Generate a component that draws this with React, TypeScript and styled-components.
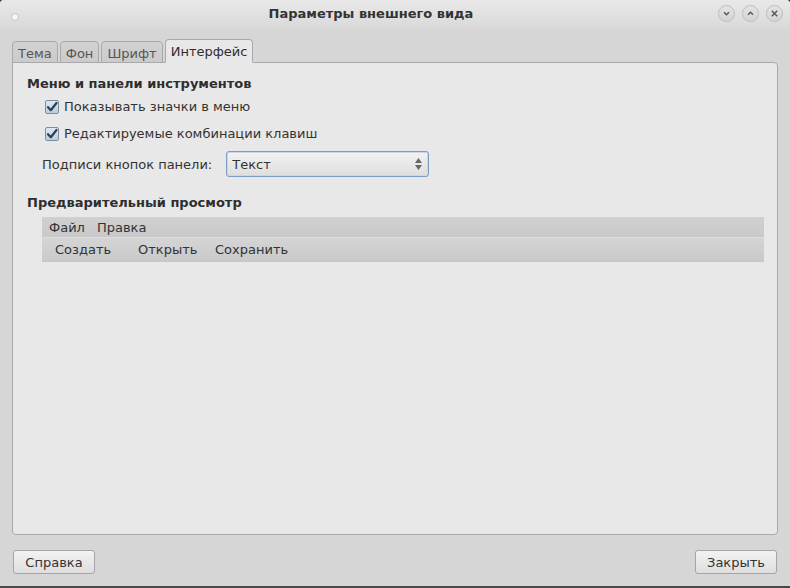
import React from "react";
import styled, { createGlobalStyle } from "styled-components";

const Global = createGlobalStyle`
  html, body { margin: 0; padding: 0; background: #2b3a42; }
  body { font-family: "DejaVu Sans", "Noto Sans", sans-serif; font-size: 13px; color: #2e2e2e; }
  * { box-sizing: border-box; }
`;

const Window = styled.div`
  width: 790px;
  height: 588px;
  background: #d6d6d6;
  border-radius: 4px 4px 0 0;
  border-bottom: 2px solid #4a4a4a;
  display: flex;
  flex-direction: column;
  overflow: hidden;
`;

const TitleBar = styled.div`
  height: 30px;
  flex: none;
  display: grid;
  grid-template-columns: 80px 1fr 80px;
  align-items: center;
  background: linear-gradient(#e9e9e9, #d8d8d8);
`;

const MenuDot = styled.div`
  width: 8px;
  height: 8px;
  border-radius: 50%;
  margin-left: 11px;
  margin-top: 3px;
  background: #f6f6f6;
  border: 1px solid #c4c4c4;
`;

const Title = styled.div`
  text-align: center;
  font-weight: bold;
  font-size: 13px;
  color: #333;
  margin-top: -4px;
  margin-right: 48px;
`;

const WinButtons = styled.div`
  display: flex;
  gap: 7px;
  justify-content: flex-end;
  padding-right: 7px;
  margin-top: -4px;
`;

const WinButton = styled.div`
  width: 17px;
  height: 17px;
  border-radius: 50%;
  border: 1px solid #bdbdbd;
  background: linear-gradient(#e4e4e4, #d4d4d4);
  display: flex;
  align-items: center;
  justify-content: center;
`;

const Body = styled.div`
  flex: 1;
  display: flex;
  flex-direction: column;
  padding: 9px 12px 12px 12px;
`;

const Tabs = styled.div`
  display: flex;
  align-items: flex-end;
  gap: 2px;
  height: 24px;
  position: relative;
  z-index: 1;
  margin-bottom: -1px;
`;

const Tab = styled.div<{ $active?: boolean }>`
  height: ${(p) => (p.$active ? "24px" : "22px")};
  padding: 0 ${(p) => (p.$active ? "5px" : "5px")};
  display: flex;
  align-items: center;
  padding-top: ${(p) => (p.$active ? "0" : "2px")};
  border: 1px solid #a9a9a9;
  border-bottom: ${(p) => (p.$active ? "1px solid #e8e8e8" : "1px solid #a9a9a9")};
  border-radius: 4px 4px 0 0;
  background: ${(p) => (p.$active ? "#e8e8e8" : "linear-gradient(#d2d2d2, #cbcbcb)")};
  color: ${(p) => (p.$active ? "#2e2e2e" : "#555")};
  font-size: 13px;
`;

const Page = styled.div`
  flex: 1;
  background: #e8e8e8;
  border: 1px solid #a9a9a9;
  border-radius: 0 4px 4px 4px;
  padding: 12px 14px 0 14px;
  display: flex;
  flex-direction: column;
`;

const SectionTitle = styled.div`
  font-weight: bold;
  font-size: 13px;
  color: #2e2e2e;
  height: 18px;
  line-height: 18px;
`;

const CheckRow = styled.label`
  display: flex;
  align-items: center;
  gap: 5px;
  padding-left: 18px;
  height: 27px;
  color: #333;
`;

const CheckBox = styled.span`
  width: 14px;
  height: 14px;
  border: 1px solid #7d8da0;
  border-radius: 2px;
  background: linear-gradient(#dfe8f2, #b8cde0);
  display: flex;
  align-items: center;
  justify-content: center;
`;

const ComboRow = styled.div`
  display: flex;
  align-items: center;
  gap: 14px;
  padding-left: 15px;
  margin-top: 4px;
  height: 26px;
  color: #333;
`;

const Combo = styled.div`
  width: 203px;
  height: 26px;
  border: 1px solid #7f9dc2;
  border-radius: 3px;
  background: linear-gradient(#f2f2f2, #dedede);
  box-shadow: inset 0 0 0 1px #c9d7e8;
  display: flex;
  align-items: center;
  justify-content: space-between;
  padding: 0 6px 0 5px;
`;

const Arrows = styled.div`
  display: flex;
  flex-direction: column;
  gap: 2px;
  color: #555;
`;

const PreviewTitle = styled(SectionTitle)`
  margin-top: 17px;
`;

const Preview = styled.div`
  margin: 5px 0 0 15px;
  width: 722px;
  display: flex;
  flex-direction: column;
`;

const MenuBar = styled.div`
  height: 20px;
  display: flex;
  align-items: center;
  gap: 12px;
  padding-left: 7px;
  background: linear-gradient(#d0d0d0, #c9c9c9);
  color: #333;
`;

const ToolBar = styled.div`
  height: 25px;
  display: flex;
  align-items: center;
  padding-left: 13px;
  border-top: 1px solid #dcdcdc;
  border-bottom: 1px solid #c4c4c4;
  background: linear-gradient(#d5d5d5, #c9c9c9);
  color: #333;
`;

const ToolItem = styled.span<{ $w: number }>`
  width: ${(p) => p.$w}px;
`;

const Footer = styled.div`
  display: flex;
  justify-content: space-between;
  padding: 15px 1px 0 1px;
`;

const Button = styled.div`
  width: 82px;
  height: 24px;
  border: 1px solid #a5a5a5;
  border-radius: 3px;
  background: linear-gradient(#f3f3f3, #dedede);
  display: flex;
  align-items: center;
  justify-content: center;
  color: #333;
`;

const Check = () => (
  <svg width="12" height="12" viewBox="0 0 12 12">
    <path d="M2 6.2 L4.8 9.2 L10.5 2" fill="none" stroke="#2d3f55" strokeWidth="2.2" strokeLinecap="round" strokeLinejoin="round" />
  </svg>
);

export default function App() {
  return (
    <>
      <Global />
      <Window>
        <TitleBar>
          <MenuDot />
          <Title>Параметры внешнего вида</Title>
          <WinButtons>
            <WinButton>
              <svg width="9" height="9" viewBox="0 0 9 9"><path d="M2 3.3 L4.5 5.8 L7 3.3" fill="none" stroke="#555" strokeWidth="1.4" /></svg>
            </WinButton>
            <WinButton>
              <svg width="9" height="9" viewBox="0 0 9 9"><path d="M2 5.7 L4.5 3.2 L7 5.7" fill="none" stroke="#555" strokeWidth="1.4" /></svg>
            </WinButton>
            <WinButton>
              <svg width="9" height="9" viewBox="0 0 9 9"><path d="M1.8 1.8 L7.2 7.2 M7.2 1.8 L1.8 7.2" fill="none" stroke="#555" strokeWidth="1.4" /></svg>
            </WinButton>
          </WinButtons>
        </TitleBar>
        <Body>
          <Tabs>
            <Tab>Тема</Tab>
            <Tab>Фон</Tab>
            <Tab>Шрифт</Tab>
            <Tab $active>Интерфейс</Tab>
          </Tabs>
          <Page>
            <SectionTitle>Меню и панели инструментов</SectionTitle>
            <CheckRow>
              <CheckBox><Check /></CheckBox>
              Показывать значки в меню
            </CheckRow>
            <CheckRow>
              <CheckBox><Check /></CheckBox>
              Редактируемые комбинации клавиш
            </CheckRow>
            <ComboRow>
              <span>Подписи кнопок панели:</span>
              <Combo>
                <span>Текст</span>
                <Arrows>
                  <svg width="7" height="5" viewBox="0 0 7 5"><path d="M3.5 0 L7 5 L0 5 Z" fill="#666" /></svg>
                  <svg width="7" height="5" viewBox="0 0 7 5"><path d="M0 0 L7 0 L3.5 5 Z" fill="#666" /></svg>
                </Arrows>
              </Combo>
            </ComboRow>
            <PreviewTitle>Предварительный просмотр</PreviewTitle>
            <Preview>
              <MenuBar>
                <span>Файл</span>
                <span>Правка</span>
              </MenuBar>
              <ToolBar>
                <ToolItem $w={83}>Создать</ToolItem>
                <ToolItem $w={77}>Открыть</ToolItem>
                <ToolItem $w={90}>Сохранить</ToolItem>
              </ToolBar>
            </Preview>
          </Page>
          <Footer>
            <Button>Справка</Button>
            <Button>Закрыть</Button>
          </Footer>
        </Body>
      </Window>
    </>
  );
}
